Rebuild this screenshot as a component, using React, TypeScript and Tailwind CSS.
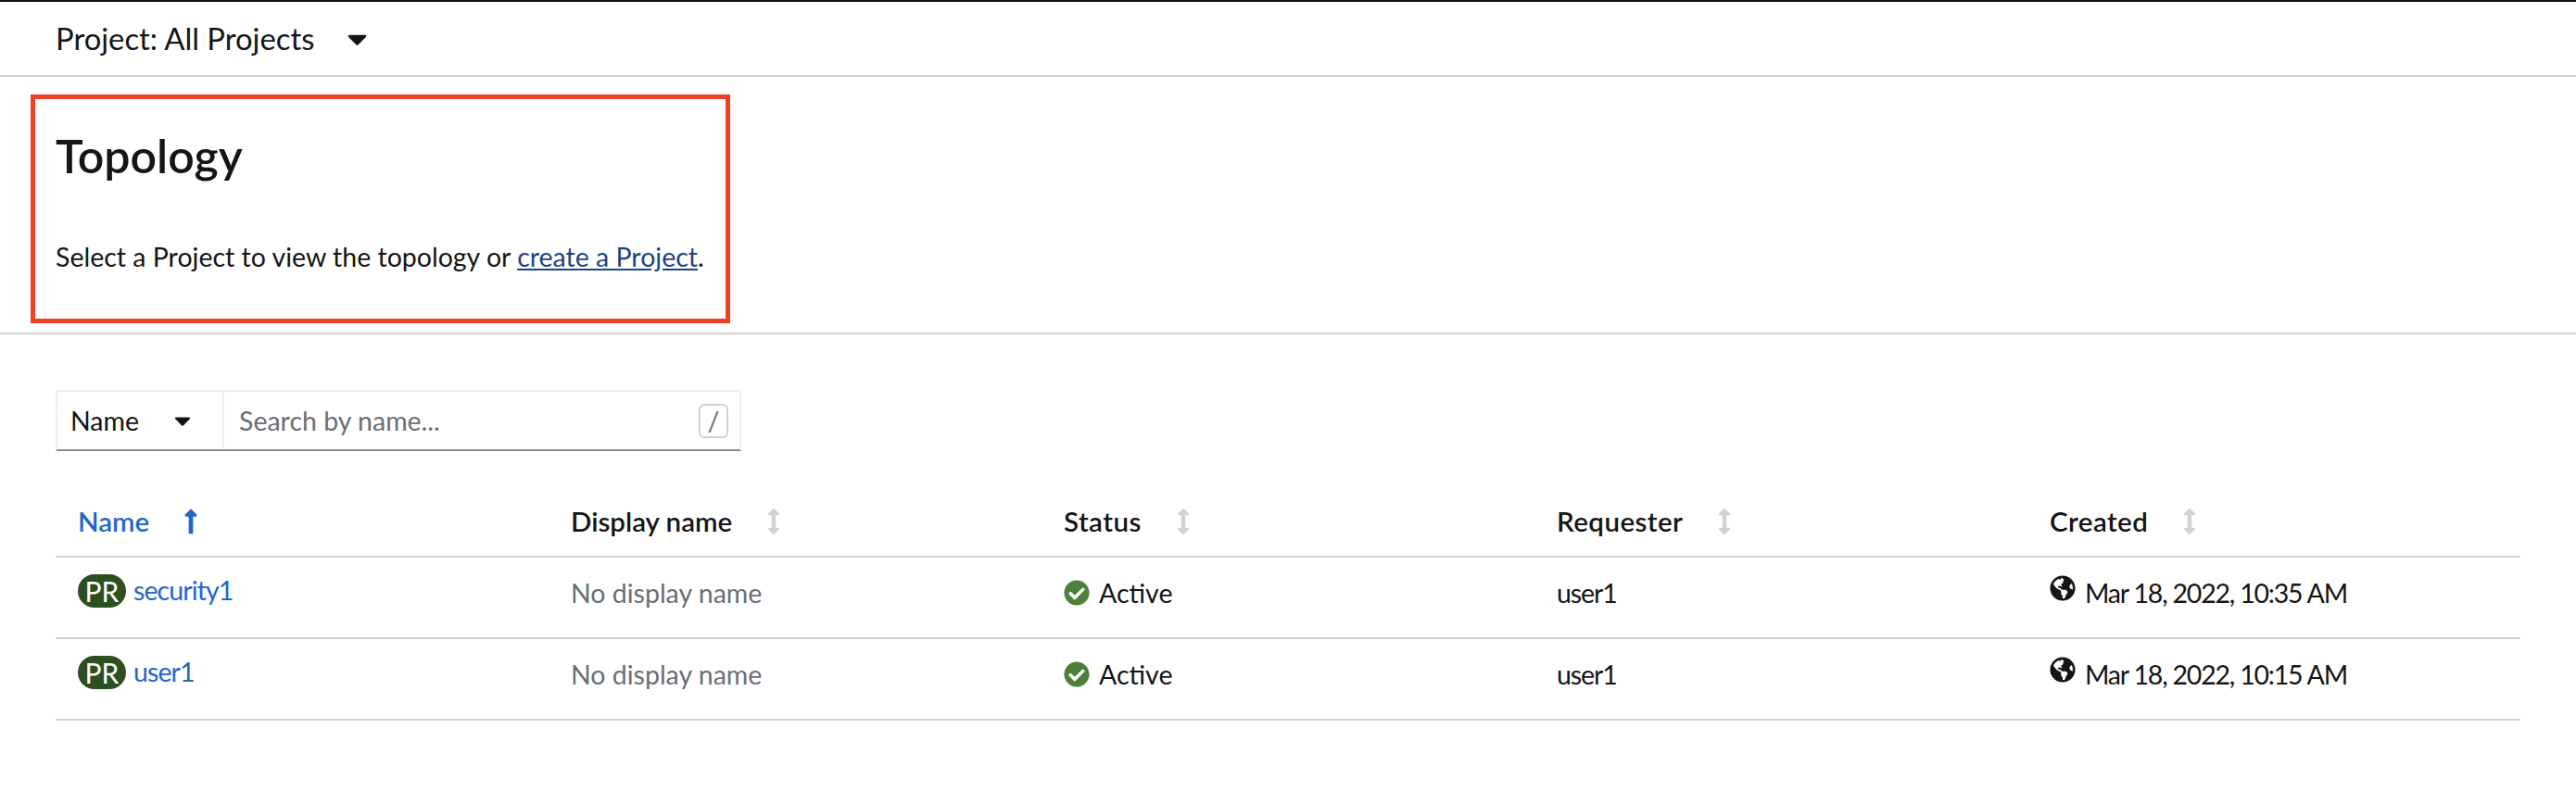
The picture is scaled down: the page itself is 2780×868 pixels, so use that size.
import { FaCaretDown, FaCheckCircle, FaGlobeAmericas, FaLongArrowAltUp, FaArrowsAltV } from 'react-icons/fa';

const columns = [
    { label: 'Name', tracking: '' },
    { label: 'Display name', tracking: '' },
    { label: 'Status', tracking: 'tracking-[0.45px]' },
    { label: 'Requester', tracking: 'tracking-[0.45px]' },
    { label: 'Created', tracking: 'tracking-[0.45px]' },
];

const projects = [
    { name: 'security1', created: 'Mar 18, 2022, 10:35 AM' },
    { name: 'user1', created: 'Mar 18, 2022, 10:15 AM' },
];

function HeaderCell({ label, tracking, active }: { label: string; tracking: string; active: boolean }) {
    return (
        <div className={`flex items-center pl-6 text-[29.5px] font-semibold ${active ? 'text-[#2566c9]' : 'text-[#151515]'}`}>
            <span className={tracking}>{label}</span>
            {active ? (
                <FaLongArrowAltUp className="ml-[37px] w-[16px] h-[30px] text-[#2566c9]" />
            ) : (
                <FaArrowsAltV className="ml-[38px] w-[14px] h-[28px] text-[#d2d2d2]" />
            )}
        </div>
    );
}

function ProjectRow({ name, created }: { name: string; created: string }) {
    return (
        <div className="grid grid-cols-5 h-[88px] border-b-2 border-[#d2d2d2] text-[#151515]">
            <div className="flex items-start pl-6 pt-[18px]">
                <span className="flex items-center justify-center w-[52px] h-9 rounded-[18px] bg-[#2c4f1f] text-white text-[30px]">PR</span>
                <a className="ml-2 leading-9 -mt-px tracking-[-0.9px] text-[#2566c9]">{name}</a>
            </div>
            <div className="flex items-start pl-6 pt-[20px] leading-9 text-[#6a6e73]">No display name</div>
            <div className="flex items-start pl-6 pt-[20px] leading-9">
                <FaCheckCircle className="mt-1 w-7 h-7 text-[#4a8239]" />
                <span className="ml-[10px]">Active</span>
            </div>
            <div className="flex items-start pl-6 pt-[20px] leading-9 tracking-[-1.1px]">user1</div>
            <div className="flex items-start pl-6 pt-[20px] leading-9">
                <FaGlobeAmericas className="-mt-px w-7 h-7 text-[#151515]" />
                <span className="ml-[10px] tracking-[-1.2px]">{created}</span>
            </div>
        </div>
    );
}

export default function App() {
    return (
        <div className="min-h-[868px] bg-white text-[28.5px] font-['Lato','Liberation_Sans',sans-serif] text-[#151515]">
            {/* Project bar */}
            <div className="flex items-center h-[83px] pl-[60px] border-t-2 border-b-2 border-t-[#151515] border-b-[#d2d2d2] text-[32.8px]">
                <span>Project: All Projects</span>
                <FaCaretDown className="ml-[36px] w-[21px] h-[34px] text-[#151515]" />
            </div>

            {/* Page heading, the red box is an annotation over it */}
            <div className="relative h-[278px] pl-[60px] border-b-2 border-[#d2d2d2]">
                <div className="absolute left-[33px] top-[19px] w-[755px] h-[247px] border-[5px] border-[#ee4025]" />
                <h1 className="pt-[53px] text-[50px] leading-[64px] font-semibold">Topology</h1>
                <p className="mt-[57px] leading-10">
                    Select a Project to view the topology or{' '}
                    <a className="underline text-[#1e4484]">create a Project</a>.
                </p>
            </div>

            <div className="px-[60px] pt-[60px]">
                {/* Filter toolbar */}
                <div className="flex w-[740px] h-[66px] border-2 border-[#f0f0f0] border-b-[#8a8d90]">
                    <div className="flex items-center w-[180px] pl-[14px] border-r-2 border-[#f0f0f0]">
                        <span>Name</span>
                        <FaCaretDown className="ml-[38px] w-[18px] h-7" />
                    </div>
                    <div className="flex flex-1 items-center pl-4 pr-[12px] text-[#6a6e73]">
                        <span className="flex-1">Search by name...</span>
                        <kbd className="flex items-center justify-center w-8 h-[37px] border-2 border-[#d2d2d2] rounded-md font-['Lato','Liberation_Sans',sans-serif]">/</kbd>
                    </div>
                </div>

                {/* Projects table */}
                <div className="grid grid-cols-5 h-[115px] pb-[10px] pt-[49px] border-b-2 border-[#d2d2d2]">
                    {columns.map((c, i) => (
                        <HeaderCell key={c.label} label={c.label} tracking={c.tracking} active={i === 0} />
                    ))}
                </div>
                {projects.map((p) => (
                    <ProjectRow key={p.name} name={p.name} created={p.created} />
                ))}
            </div>
        </div>
    );
}
